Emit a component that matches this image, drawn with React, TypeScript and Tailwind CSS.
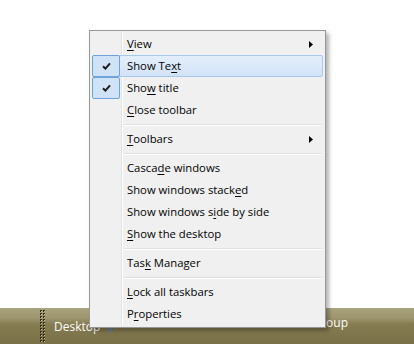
import React from "react";

type Item =
  | { kind: "sep" }
  | {
      kind: "item";
      before: string;
      key: string;
      after: string;
      checked?: boolean;
      active?: boolean;
      sub?: boolean;
    };

const items: Item[] = [
  { kind: "item", before: "", key: "V", after: "iew", sub: true },
  { kind: "item", before: "Show Te", key: "x", after: "t", checked: true, active: true },
  { kind: "item", before: "Sho", key: "w", after: " title", checked: true },
  { kind: "item", before: "", key: "C", after: "lose toolbar" },
  { kind: "sep" },
  { kind: "item", before: "", key: "T", after: "oolbars", sub: true },
  { kind: "sep" },
  { kind: "item", before: "Casca", key: "d", after: "e windows" },
  { kind: "item", before: "Show windows stack", key: "e", after: "d" },
  { kind: "item", before: "Show windows s", key: "i", after: "de by side" },
  { kind: "item", before: "", key: "S", after: "how the desktop" },
  { kind: "sep" },
  { kind: "item", before: "Tas", key: "k", after: " Manager" },
  { kind: "sep" },
  { kind: "item", before: "", key: "L", after: "ock all taskbars" },
  { kind: "item", before: "P", key: "r", after: "operties" },
];

function Check() {
  return (
    <svg width="9" height="8" viewBox="0 0 9 8">
      <path d="M1 4.2 L3.4 6.6 L8 1.4" fill="none" stroke="#1b1b1b" strokeWidth="2" />
    </svg>
  );
}

function Arrow() {
  return (
    <svg width="4" height="7" viewBox="0 0 4 7">
      <path d="M0 0 L4 3.5 L0 7 Z" fill="#000" />
    </svg>
  );
}

function Grip() {
  const dots = [];
  for (let r = 0; r < 11; r++) {
    for (let c = 0; c < 2; c++) {
      dots.push(
        <rect key={`${r}-${c}`} x={c * 3} y={r * 3} width="2" height="2" fill="#2f2b18" />
      );
      dots.push(
        <rect key={`h${r}-${c}`} x={c * 3 + 1} y={r * 3 + 1} width="1" height="1" fill="#c8c29a" />
      );
    }
  }
  return (
    <svg width="6" height="33" viewBox="0 0 6 33">
      {dots}
    </svg>
  );
}

export default function App() {
  return (
    <div
      className="relative flex h-[344px] w-[414px] flex-col overflow-hidden bg-white"
      style={{ fontFamily: '"Open Sans", "Segoe UI", sans-serif' }}
    >
      <div className="flex-1" />

      {/* Taskbar */}
      <div className="flex h-[36px] items-center bg-[linear-gradient(to_bottom,#a9a37e_0%,#9c956e_28%,#857c52_45%,#7a7048_100%)] pl-[40px] text-[12px] text-white">
        <Grip />
        <span className="ml-[8px] mt-[2px]">Desktop</span>
        <span className="ml-[8px] mt-[6px] text-[10px] text-[#4a7fd0]">»</span>
        <span className="ml-auto mr-[66px] -mt-[6px]">Group</span>
      </div>

      {/* Context menu */}
      <div className="absolute left-[89px] top-[30px] z-10 flex w-[237px] flex-col border border-[#979797] bg-[#f0f0f0] p-[2px] text-[11.3px] leading-none text-black shadow-[3px_3px_4px_rgba(0,0,0,0.3)]">
        <div className="absolute bottom-[2px] left-[31px] top-[2px] w-px bg-[#e2e3e3]" />
        <div className="absolute bottom-[2px] left-[32px] top-[2px] w-px bg-white" />
        {items.map((it, i) =>
          it.kind === "sep" ? (
            <div key={i} className="flex h-[7px] shrink-0 flex-col justify-center pl-[32px] pr-[1px]">
              <div className="h-px shrink-0 bg-[#e0e0e0]" />
              <div className="h-px shrink-0 bg-white" />
            </div>
          ) : (
            <div
              key={i}
              className={`relative flex h-[22px] shrink-0 items-center rounded-[2px] border ${
                it.active
                  ? "border-[#a8c9ee] bg-[linear-gradient(to_bottom,#e4eefb,#d2e3f7)]"
                  : "border-transparent"
              }`}
            >
              <div className="-ml-px flex h-[22px] w-[28px] shrink-0 items-center justify-center">
                {it.checked && (
                  <div className="flex h-[22px] w-[28px] items-center justify-center rounded-[2px] border border-[#6fa2d6] bg-[#cfe2f6]">
                    <Check />
                  </div>
                )}
              </div>
              <span className="ml-[7px] whitespace-pre">
                {it.before}
                <span className="underline underline-offset-2">{it.key}</span>
                {it.after}
              </span>
              {it.sub && (
                <span className="ml-auto mr-[9px] flex">
                  <Arrow />
                </span>
              )}
            </div>
          )
        )}
      </div>
    </div>
  );
}
